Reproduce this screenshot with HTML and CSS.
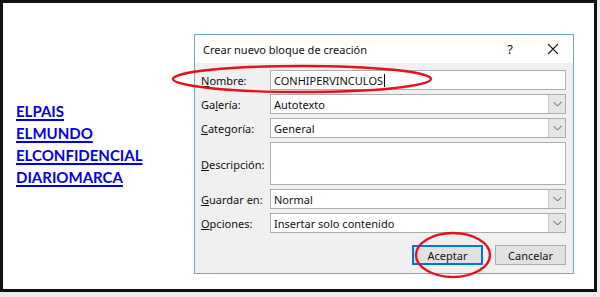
FILE: index.html
```html
<!DOCTYPE html>
<html>
<head>
<meta charset="utf-8">
<link rel="stylesheet" href="styles.css">
</head>
<body>
<div class="frame">
  <div class="links">
    <a href="#">ELPAIS</a>
    <a href="#">ELMUNDO</a>
    <a href="#">ELCONFIDENCIAL</a>
    <a href="#">DIARIOMARCA</a>
  </div>
  <div class="dialog">
    <div class="titlebar">
      <span class="title">Crear nuevo bloque de creación</span>
      <span class="help">?</span>
      <svg class="close" width="12" height="12" viewBox="0 0 12 12"><path d="M1 1L11 11M11 1L1 11" stroke="#222" stroke-width="1.1"/></svg>
    </div>
    <div class="body">
      <div class="form">
        <label class="lbl"><u>N</u>ombre:</label>
        <div class="field">CONHIPERVINCULOS<span class="caret"></span></div>
        <label class="lbl">Ga<u>l</u>ería:</label>
        <div class="field select"><span class="val">Autotexto</span><span class="dd"><svg width="9" height="6" viewBox="0 0 9 6"><path d="M0.5 1L4.5 5L8.5 1" fill="none" stroke="#555" stroke-width="1"/></svg></span></div>
        <label class="lbl"><u>C</u>ategoría:</label>
        <div class="field select"><span class="val">General</span><span class="dd"><svg width="9" height="6" viewBox="0 0 9 6"><path d="M0.5 1L4.5 5L8.5 1" fill="none" stroke="#555" stroke-width="1"/></svg></span></div>
        <label class="lbl"><u>D</u>escripción:</label>
        <div class="field area"></div>
        <label class="lbl"><u>G</u>uardar en:</label>
        <div class="field select"><span class="val">Normal</span><span class="dd"><svg width="9" height="6" viewBox="0 0 9 6"><path d="M0.5 1L4.5 5L8.5 1" fill="none" stroke="#555" stroke-width="1"/></svg></span></div>
        <label class="lbl"><u>O</u>pciones:</label>
        <div class="field select"><span class="val">Insertar solo contenido</span><span class="dd"><svg width="9" height="6" viewBox="0 0 9 6"><path d="M0.5 1L4.5 5L8.5 1" fill="none" stroke="#555" stroke-width="1"/></svg></span></div>
      </div>
      <div class="buttons">
        <button class="btn primary">Aceptar</button>
        <button class="btn">Cancelar</button>
      </div>
    </div>
  </div>
  <svg class="marks" width="597" height="292" viewBox="0 0 597 292">
    <ellipse cx="302" cy="79" rx="129" ry="13" fill="none" stroke="#e8101a" stroke-width="2.4"/>
    <ellipse cx="453" cy="255" rx="37" ry="22" fill="none" stroke="#e8101a" stroke-width="2.4"/>
  </svg>
</div>
</body>
</html>
```
FILE: styles.css
```css
html, body {
  margin: 0;
  padding: 0;
  background: #ececec;
}
.frame {
  position: relative;
  box-sizing: border-box;
  width: 597px;
  height: 292px;
  border: 3px solid #111;
  background: #fff;
  display: flex;
  align-items: flex-start;
}
.links {
  display: flex;
  flex-direction: column;
  margin-left: 13px;
  margin-top: 97px;
  width: 178px;
  flex: none;
}
.links a {
  font-family: "Lato", "Liberation Sans", sans-serif;
  font-weight: 700;
  font-size: 15px;
  line-height: 22px;
  color: #0000ee;
  text-decoration: underline;
  text-decoration-thickness: 1.5px;
  text-underline-offset: 2px;
  width: max-content;
}
.dialog {
  box-sizing: border-box;
  width: 380px;
  height: 240px;
  margin-top: 31px;
  border: 1px solid #6ea6e0;
  background: #f0f0f0;
  font-family: "Noto Sans", "Open Sans", sans-serif;
  font-size: 11px;
  color: #111;
  flex: none;
}
.titlebar {
  height: 28px;
  background: #fff;
  display: flex;
  align-items: center;
  padding-left: 8px;
}
.title {
  font-size: 11px;
  flex: 1;
  padding-top: 1px;
}
.help {
  font-size: 13px;
  margin-right: 34px;
}
.close {
  margin-right: 14px;
}
.body {
  padding: 7px 7px 0 6px;
}
.form {
  display: grid;
  grid-template-columns: 69px 1fr;
  grid-template-rows: 20px 20px 20px 43px 20px 20px;
  row-gap: 4px;
}
.lbl {
  display: flex;
  align-items: center;
  padding-top: 1px;
}
.lbl u {
  text-underline-offset: 1px;
}
.field {
  box-sizing: border-box;
  background: #fff;
  border: 1px solid #adadad;
  display: flex;
  align-items: center;
  padding-left: 3px;
}
.caret {
  display: inline-block;
  width: 1px;
  height: 13px;
  background: #000;
  margin-left: 1px;
}
.select .val {
  flex: 1;
}
.dd {
  align-self: stretch;
  width: 16px;
  background: #e5e5e5;
  border-left: 1px solid #c4c4c4;
  display: flex;
  align-items: center;
  justify-content: center;
}
.buttons {
  display: flex;
  justify-content: flex-end;
  gap: 12px;
  margin-top: 12px;
}
.btn {
  box-sizing: border-box;
  width: 71px;
  height: 20px;
  font-family: "Noto Sans", "Open Sans", sans-serif;
  font-size: 11px;
  color: #111;
  background: #e1e1e1;
  border: 1px solid #adadad;
  padding: 0;
}
.btn.primary {
  border: 2px solid #0078d7;
}
.marks {
  position: absolute;
  left: -3px;
  top: -3px;
  pointer-events: none;
}
```
